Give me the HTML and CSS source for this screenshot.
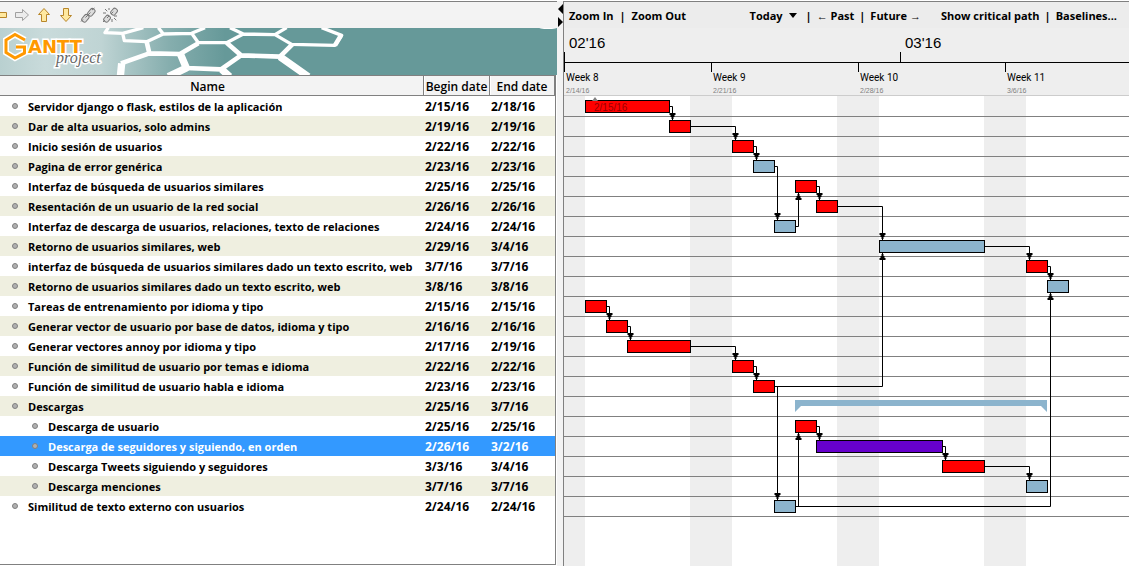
FILE: index.html
```html
<!DOCTYPE html>
<html lang="es">
<head>
<meta charset="utf-8">
<title>GanttProject</title>
<link rel="stylesheet" href="styles.css">
</head>
<body>
<main class="page">
  <section class="tasks">
    <div class="toolbar">
      <button class="tool" aria-label="Unindent"><svg width="16" height="16" viewBox="0 0 16 16"><path class="gold" d="M1.500 8L7.500 2.500V5.500H14.500V10.500H7.500V13.500Z"/></svg></button>
      <button class="tool" aria-label="Indent"><svg width="16" height="16" viewBox="0 0 16 16"><path class="dim" d="M14.500 8L8.500 2.500V5.500H1.500V10.500H8.500V13.500Z"/></svg></button>
      <button class="tool" aria-label="Move up"><svg width="16" height="16" viewBox="0 0 16 16"><path class="gold" d="M8 1.500L13.500 7.500H10.500V14.500H5.500V7.500H2.500Z"/></svg></button>
      <button class="tool" aria-label="Move down"><svg width="16" height="16" viewBox="0 0 16 16"><path class="gold" d="M8 14.500L13.500 8.500H10.500V1.500H5.500V8.500H2.500Z"/></svg></button>
      <button class="tool" aria-label="Link tasks"><svg width="16" height="16" viewBox="0 0 16 16"><g class="chain"><rect x="-4" y="-2" width="8" height="5" rx="2" transform="translate(11 5) rotate(-50)"/><rect x="-4" y="-2" width="8" height="5" rx="2" transform="translate(5 11) rotate(-50)"/><path d="M5.500 10.500L10.500 5.500M3 12.500L1 14.500M12 3L14.500 1"/></g></svg></button>
      <button class="tool" aria-label="Unlink tasks"><svg width="16" height="16" viewBox="0 0 16 16"><g class="chain"><rect x="-4" y="-2" width="7" height="5" rx="2" transform="translate(12 4) rotate(-50)"/><rect x="-4" y="-2" width="7" height="5" rx="2" transform="translate(5 11) rotate(-50)"/><path d="M5 11L7 9M9 7L12 4M3 13L1 15M7 1V3M3 2L6 5M1 6H4M12 11L15 14M10 12V15M12 9H15" stroke-dasharray="3 1"/></g></svg></button>
    </div>
    <svg class="banner" role="img" aria-label="Gantt project" width="100%" height="47">
      <defs><linearGradient id="fade" gradientUnits="userSpaceOnUse" x1="0" y1="0" x2="225" y2="0"><stop offset="0" stop-color="#b9d0d0"/><stop offset=".2" stop-color="#c9dbdb"/><stop offset=".45" stop-color="#bfd4d4"/><stop offset=".75" stop-color="#86aeae"/><stop offset="1" stop-color="#669999"/></linearGradient></defs>
      <rect width="100%" height="47" fill="url(#fade)"/>
      <g transform="translate(95 -2) scale(.3333)" fill="none" stroke="#fff" stroke-linejoin="round">
        <path stroke-width="10" d="M40 5L30 20L83 22L145 5M83 22L88 44L155 47L205 24L290 22L330 5M205 24L190 5M290 22L310 50L395 50L445 24L540 26L575 5M445 24L405 5M540 26L590 55L720 58L740 28L680 5"/>
        <path stroke-width="14" d="M155 47L163 82L255 84L310 52M395 50L438 88L555 92L592 55M163 82L78 112M255 84L274 126L378 130L438 88M720 58L738 28"/>
        <path stroke-width="22" d="M80 112L76 152M257 86L274 126L220 152M380 130L404 152M555 92L640 152"/>
      </g>
      <ellipse cx="548" cy="-1" rx="10" ry="2" fill="#fff"/>
      <path d="M25 12L15 6.500L6 12V24.500L15 30L24.500 25V19H16" fill="none" stroke="#fff" stroke-width="6"/>
      <path d="M25 12L15 6.500L6 12V24.500L15 30L24.500 25V19H16" fill="none" stroke="#ff9900" stroke-width="3"/>
      <text class="brand" x="28" y="25">ANTT</text>
      <text class="brand-sub" x="56" y="35">project</text>
    </svg>
    <div class="table-box">
      <table class="grid">
        <colgroup><col><col class="col-begin"><col class="col-end"></colgroup>
        <thead><tr><th>Name</th><th>Begin date</th><th>End date</th></tr></thead>
        <tbody>
          <tr><td>Servidor django o flask, estilos de la aplicación</td><td>2/15/16</td><td>2/18/16</td></tr>
          <tr><td>Dar de alta usuarios, solo admins</td><td>2/19/16</td><td>2/19/16</td></tr>
          <tr><td>Inicio sesión de usuarios</td><td>2/22/16</td><td>2/22/16</td></tr>
          <tr><td>Pagina de error genérica</td><td>2/23/16</td><td>2/23/16</td></tr>
          <tr><td>Interfaz de búsqueda de usuarios similares</td><td>2/25/16</td><td>2/25/16</td></tr>
          <tr><td>Resentación de un usuario de la red social</td><td>2/26/16</td><td>2/26/16</td></tr>
          <tr><td>Interfaz de descarga de usuarios, relaciones, texto de relaciones</td><td>2/24/16</td><td>2/24/16</td></tr>
          <tr><td>Retorno de usuarios similares, web</td><td>2/29/16</td><td>3/4/16</td></tr>
          <tr><td>interfaz de búsqueda de usuarios similares dado un texto escrito, web</td><td>3/7/16</td><td>3/7/16</td></tr>
          <tr><td>Retorno de usuarios similares dado un texto escrito, web</td><td>3/8/16</td><td>3/8/16</td></tr>
          <tr><td>Tareas de entrenamiento por idioma y tipo</td><td>2/15/16</td><td>2/15/16</td></tr>
          <tr><td>Generar vector de usuario por base de datos, idioma y tipo</td><td>2/16/16</td><td>2/16/16</td></tr>
          <tr><td>Generar vectores annoy por idioma y tipo</td><td>2/17/16</td><td>2/19/16</td></tr>
          <tr><td>Función de similitud de usuario por temas e idioma</td><td>2/22/16</td><td>2/22/16</td></tr>
          <tr><td>Función de similitud de usuario habla e idioma</td><td>2/23/16</td><td>2/23/16</td></tr>
          <tr><td>Descargas</td><td>2/25/16</td><td>3/7/16</td></tr>
          <tr class="child"><td>Descarga de usuario</td><td>2/25/16</td><td>2/25/16</td></tr>
          <tr class="child selected"><td>Descarga de seguidores y siguiendo, en orden</td><td>2/26/16</td><td>3/2/16</td></tr>
          <tr class="child"><td>Descarga Tweets siguiendo y seguidores</td><td>3/3/16</td><td>3/4/16</td></tr>
          <tr class="child"><td>Descarga menciones</td><td>3/7/16</td><td>3/7/16</td></tr>
          <tr><td>Similitud de texto externo con usuarios</td><td>2/24/16</td><td>2/24/16</td></tr>
        </tbody>
      </table>
    </div>
  </section>

  <div class="splitter">
    <svg width="6" height="28" viewBox="0 0 6 28"><path d="M6 3V13L1 8ZM1 16V26L6 21Z"/></svg>
  </div>

  <section class="chart">
    <div class="actions">
      <div class="group zoom"><button>Zoom In</button><i>|</i><button>Zoom Out</button></div>
      <div class="group nav"><button class="today">Today <svg width="8" height="5" viewBox="0 0 8 5"><path d="M0 0H8L4 5Z"/></svg></button><i>|</i><button>← Past</button><i>|</i><button>Future →</button></div>
      <div class="group"><button>Show critical path</button><i>|</i><button>Baselines...</button></div>
    </div>
    <div class="months"><span class="month">02'16</span><span class="month">03'16</span></div>
    <div class="weeks">
      <div class="week">Week 8<small>2/14/16</small></div>
      <div class="week">Week 9<small>2/21/16</small></div>
      <div class="week">Week 10<small>2/28/16</small></div>
      <div class="week">Week 11<small>3/6/16</small></div>
    </div>
    <div class="canvas">
      <svg class="plot" width="100%" height="100%">
        <defs>
          <pattern id="rows" width="20" height="20" patternUnits="userSpaceOnUse"><rect width="20" height="1" fill="#808080"/></pattern>
          <marker id="tip" markerUnits="userSpaceOnUse" markerWidth="8" markerHeight="8" refX="7" refY="4" orient="auto"><path d="M0 1H2V2H4V3H6V5H4V6H2V7H0Z"/></marker>
        </defs>
        <g fill="#eee"><rect width="21" height="100%"/><rect x="126" width="42" height="100%"/><rect x="273" width="42" height="100%"/><rect x="420" width="42" height="100%"/></g>
        <rect y="20" width="100%" height="401" fill="url(#rows)"/>
        <g class="critical">
          <rect x="21.500" y="4.500" width="84" height="12"/>
          <rect x="105.500" y="24.500" width="21" height="12"/>
          <rect x="168.500" y="44.500" width="21" height="12"/>
          <rect x="231.500" y="84.500" width="21" height="12"/>
          <rect x="252.500" y="104.500" width="21" height="12"/>
          <rect x="462.500" y="164.500" width="21" height="12"/>
          <rect x="21.500" y="204.500" width="21" height="12"/>
          <rect x="42.500" y="224.500" width="21" height="12"/>
          <rect x="63.500" y="244.500" width="63" height="12"/>
          <rect x="168.500" y="264.500" width="21" height="12"/>
          <rect x="189.500" y="284.500" width="21" height="12"/>
          <rect x="231.500" y="324.500" width="21" height="12"/>
          <rect x="378.500" y="364.500" width="42" height="12"/>
        </g>
        <g class="normal">
          <rect x="189.500" y="64.500" width="21" height="12"/>
          <rect x="210.500" y="124.500" width="21" height="12"/>
          <rect x="315.500" y="144.500" width="105" height="12"/>
          <rect x="483.500" y="184.500" width="21" height="12"/>
          <rect x="462.500" y="384.500" width="21" height="12"/>
          <rect x="210.500" y="404.500" width="21" height="12"/>
        </g>
        <rect class="picked" x="252.500" y="344.500" width="126" height="12"/>
        <path class="summary" d="M231 304H483V316L477 310H237L231 316Z"/>
        <g class="links">
          <path d="M105.500 10.500H108.500V24"/>
          <path d="M126.500 30.500H171.500V44"/>
          <path d="M189.500 50.500H192.500V64"/>
          <path d="M210.500 70.500H213.500V124"/>
          <path d="M231.500 130.500H234.500V97"/>
          <path d="M252.500 90.500H255.500V104"/>
          <path d="M273.500 110.500H318.500V144"/>
          <path d="M210.500 290.500H318.500V157"/>
          <path d="M420.500 150.500H465.500V164"/>
          <path d="M483.500 170.500H486.500V184"/>
          <path d="M231.500 410.500H486.500V197"/>
          <path d="M42.500 210.500H45.500V224"/>
          <path d="M63.500 230.500H66.500V244"/>
          <path d="M126.500 250.500H171.500V264"/>
          <path d="M189.500 270.500H192.500V284"/>
          <path d="M210.500 290.500H213.500V404"/>
          <path d="M231.500 410.500H234.500V337"/>
          <path d="M252.500 330.500H255.500V344"/>
          <path d="M378.500 350.500H381.500V364"/>
          <path d="M420.500 370.500H465.500V384"/>
        </g>
        <path d="M31 1L34 5H28Z" fill="#808080"/>
        <text class="note" x="30" y="15">2/15/16</text>
      </svg>
    </div>
  </section>
</main>
</body>
</html>
```
FILE: styles.css
```css
*, *::before { box-sizing: border-box; }
body {
  margin: 0;
  background: #fff;
  color: #000;
  font: 700 11px/19px "Open Sans", "Noto Sans", sans-serif;
}
button {
  border: 0;
  padding: 0;
  background: none;
  color: inherit;
  font: inherit;
  white-space: nowrap;
}
svg { display: block; }

.page {
  display: grid;
  grid-template-columns: minmax(0, 557fr) 6px minmax(0, 566fr);
  min-height: 100vh;
  padding: 1px 0;
}

.tasks {
  display: flex;
  flex-direction: column;
  min-width: 0;
  padding-bottom: 1px;
}
.toolbar {
  display: flex;
  height: 27px;
  border-top: 1px solid #808080;
  background: #f3f3f3;
  overflow: hidden;
}
.tool {
  display: grid;
  place-items: center;
  flex: none;
  width: 22px;
}
.tool:first-child { margin-left: -11px; }
.gold { fill: #ffe9a0; stroke: #b8862a; }
.dim { fill: #ececec; stroke: #a0a0a0; }
.chain { fill: #ddd; stroke: #777; }

.banner { flex: none; }
.brand {
  fill: #ff9900;
  stroke: #fff;
  stroke-width: 3px;
  paint-order: stroke;
  font: 700 18px "DejaVu Sans", sans-serif;
}
.brand-sub {
  fill: #666;
  stroke: #fff;
  stroke-width: 3px;
  paint-order: stroke;
  font: italic 400 16px "Liberation Serif", serif;
}

.table-box {
  flex: 1;
  margin-right: 1px;
  border: solid #808080;
  border-width: 1px 1px 1px 0;
}
.grid {
  width: 100%;
  table-layout: fixed;
  border-collapse: separate;
  border-spacing: 0;
}
.col-begin { width: 66px; }
.col-end { width: 65px; }
.grid th {
  height: 20px;
  padding: 2px 0 0;
  border-bottom: 1px solid #808080;
  border-right: 1px solid #808080;
  background: #f3f3f3;
  font-size: 12px;
  line-height: 17px;
  font-weight: 600;
  text-align: center;
  white-space: nowrap;
}
.grid th:first-child { padding-right: 8px; }
.grid th + th { box-shadow: inset 1px 0 #fff; }
.grid td {
  height: 20px;
  padding: 1px 0 0 1px;
  white-space: nowrap;
  overflow: hidden;
}
.grid td + td { font-size: 12px; }
.grid td:first-child { padding-left: 12px; }
.grid .child td:first-child { padding-left: 32px; }
.grid td:first-child::before {
  content: "";
  display: inline-block;
  width: 6px;
  height: 6px;
  margin-right: 10px;
  border: 1px solid #808080;
  border-radius: 3px;
  background: #b0b0b0;
  vertical-align: 2px;
}
.grid tbody tr:nth-child(even) { background: #efefe0; }
.grid tbody .selected { background: #3399ff !important; color: #fff; }

.splitter { background: #f3f3f3; }

.chart {
  display: flex;
  flex-direction: column;
  min-width: 0;
  border-left: 1px solid #808080;
  border-top: 1px solid #808080;
}
.actions {
  display: flex;
  align-items: flex-start;
  height: 26px;
  padding: 4px 12px 0 5px;
  background: #ececec;
}
.group { display: flex; align-items: flex-start; gap: 5px; }
.group i { font-style: normal; }
.zoom { margin-right: auto; gap: 6px; }
.nav { margin-right: 20px; }
.today {
  display: flex;
  align-items: center;
  gap: 6px;
  margin-right: 4px;
}
.months {
  display: flex;
  height: 35px;
  border-bottom: 1px solid #000;
  background: #eee;
  overflow: hidden;
}
.month {
  flex: none;
  width: 336px;
  padding: 6px 5px 0;
  background: linear-gradient(#000, #000) 0 100% / 1px 10px no-repeat;
  font: 400 15px/18px "Liberation Sans", sans-serif;
}
.weeks {
  display: flex;
  height: 33px;
  border-bottom: 1px solid #ccc;
  background: #eee;
  overflow: hidden;
}
.week {
  flex: none;
  width: 147px;
  padding: 9px 2px 0;
  background: linear-gradient(#000, #000) 0 0 / 1px 9px no-repeat;
  font: 400 10px/12px Roboto, sans-serif;
}
.week small {
  display: block;
  padding-top: 1px;
  color: #808080;
  font: 400 7px/12px "Liberation Sans", sans-serif;
}
.canvas {
  display: grid;
  flex: 1;
  min-height: 440px;
  overflow: hidden;
}

.critical { fill: #f00; stroke: #000; }
.normal { fill: #8cb4cd; stroke: #000; }
.picked { fill: #60c; stroke: #000; }
.summary { fill: #8cb4cd; }
.links { fill: none; stroke: #000; }
.links path { marker-end: url(#tip); }
.note { fill: #900; font: 400 10px "Liberation Sans", sans-serif; }
```
